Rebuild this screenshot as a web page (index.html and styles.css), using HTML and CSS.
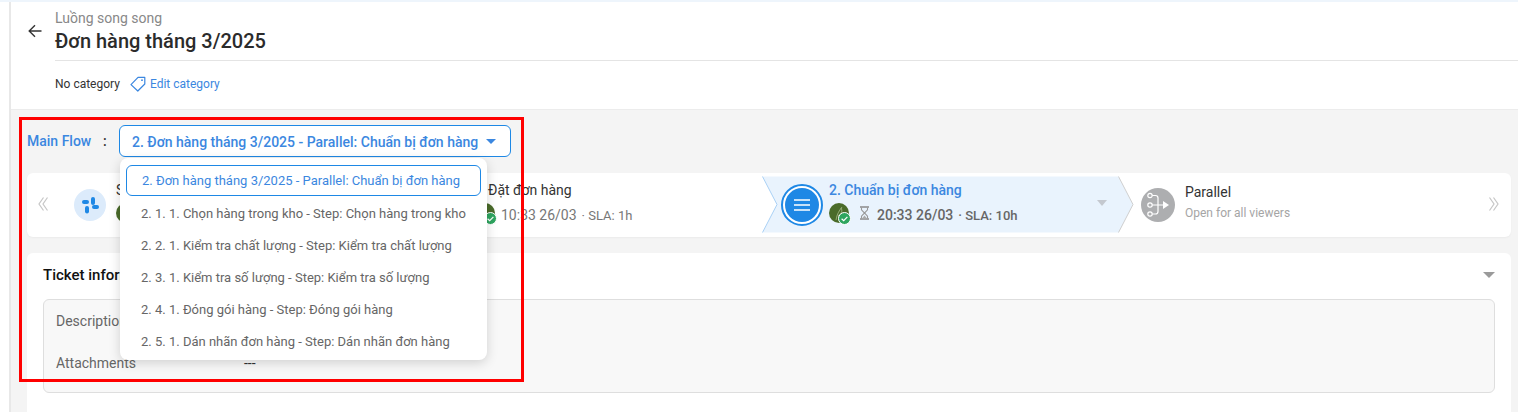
FILE: index.html
```html
<!DOCTYPE html>
<html lang="vi">
<head>
<meta charset="utf-8">
<title>Đơn hàng tháng 3/2025</title>
<link rel="stylesheet" href="styles.css">
</head>
<body>
<div class="page">
  <div class="topline"></div>
  <div class="shell">
    <div class="rail"></div>
    <div class="main">
      <header class="header">
        <div class="title-row">
          <svg class="back" width="14" height="14" viewBox="0 0 14 14"><path d="M13.5 7H1.5M7 1.2 1.2 7 7 12.8" fill="none" stroke="#333" stroke-width="1.4"/></svg>
          <div class="titles">
            <div class="subtitle">Luồng song song</div>
            <h1 class="title">Đơn hàng tháng 3/2025</h1>
          </div>
        </div>
        <div class="category">
          <span class="no-cat">No category</span>
          <svg class="tag" width="16" height="16" viewBox="0 0 16 16"><path d="M1 8.6 8 1.4H14.8V8L7.8 15Z" fill="none" stroke="#3b87e0" stroke-width="1.2" stroke-linejoin="round"/><circle cx="12" cy="4.2" r=".9" fill="#3b87e0"/></svg>
          <span class="edit-cat">Edit category</span>
        </div>
      </header>

      <div class="content">
        <div class="flow-row">
          <span class="flow-label">Main Flow</span>
          <span class="flow-colon">:</span>
          <div class="select">
            <span>2. Đơn hàng tháng 3/2025 - Parallel: Chuẩn bị đơn hàng</span>
            <span class="select-caret"></span>
          </div>
          <ul class="menu">
            <li class="menu-item selected">2. Đơn hàng tháng 3/2025 - Parallel: Chuẩn bị đơn hàng</li>
            <li class="menu-item">2. 1. 1. Chọn hàng trong kho - Step: Chọn hàng trong kho</li>
            <li class="menu-item">2. 2. 1. Kiểm tra chất lượng - Step: Kiểm tra chất lượng</li>
            <li class="menu-item">2. 3. 1. Kiểm tra số lượng - Step: Kiểm tra số lượng</li>
            <li class="menu-item">2. 4. 1. Đóng gói hàng - Step: Đóng gói hàng</li>
            <li class="menu-item">2. 5. 1. Dán nhãn đơn hàng - Step: Dán nhãn đơn hàng</li>
          </ul>
        </div>

        <section class="stepper">
          <span class="nav nav-prev"><svg width="10" height="14" viewBox="0 0 10 14"><path d="M5.5 .5 1 7 5.5 13.5M9.5 .5 5 7 9.5 13.5" fill="none" stroke="#c6c6c6" stroke-width="1.2"/></svg></span>
          <div class="step step-start">
            <span class="start-icon">
              <svg width="20" height="20" viewBox="0 0 20 20" fill="#1e88e5"><rect x="11" y="2" width="4" height="8" rx="2"/><rect x="12" y="10" width="7" height="4" rx="2"/><rect x="5" y="11" width="4" height="7.5" rx="2"/><rect x="2" y="5" width="7" height="4" rx="2"/></svg>
            </span>
            <div class="step-body">
              <div class="step-name">Start</div>
              <div class="step-meta"><span class="avatar"></span></div>
            </div>
          </div>
          <div class="step step-order">
            <div class="step-body">
              <div class="step-name order-name">1. Đặt đơn hàng</div>
              <div class="step-meta">
                <span class="avatar"><svg class="badge" width="13" height="13" viewBox="0 0 13 13"><circle cx="6.5" cy="6.5" r="6" fill="#2ea55f" stroke="#fff"/><path d="M3.6 6.7 5.7 8.7 9.4 4.8" fill="none" stroke="#fff" stroke-width="1.2"/></svg></span>
                <span class="time">10:33 26/03</span><span class="sla">· SLA: 1h</span>
              </div>
            </div>
          </div>
          <div class="step step-active">
            <svg class="hex" width="372" height="58" viewBox="0 0 372 58"><path d="M.5.5H356.5L371 28.5 356.5 56.5H.5L15 28.5Z" fill="#e9f3fd"/><path d="M.5.5 15 28.5.5 56.5" fill="none" stroke="#a9d0f5"/><path d="M356.5.5 371 28.5 356.5 56.5" fill="none" stroke="#cfcfcf"/></svg>
            <span class="ring"><span class="ring-fill"><svg width="16" height="14" viewBox="0 0 16 14"><path d="M0 2H16M0 7H16M0 12H16" stroke="#fff" stroke-width="1.6"/></svg></span></span>
            <div class="step-body">
              <div class="step-name active-name">2. Chuẩn bị đơn hàng</div>
              <div class="step-meta">
                <span class="avatar leaf"><svg class="leaf-mark" width="20" height="20" viewBox="0 0 20 20"><path d="M7 17C8 11 10 8 13 4M12 5C14 8 12 11 9 13" fill="none" stroke="#a8bd8c" stroke-width=".8"/></svg><svg class="badge" width="13" height="13" viewBox="0 0 13 13"><circle cx="6.5" cy="6.5" r="6" fill="#2ea55f" stroke="#fff"/><path d="M3.6 6.7 5.7 8.7 9.4 4.8" fill="none" stroke="#fff" stroke-width="1.2"/></svg></span>
                <svg class="hourglass" width="9" height="14" viewBox="0 0 9 14"><path d="M0 1H9M0 13H9" stroke="#8a8a8a" stroke-width="1.6"/><path d="M1.5 1.5V3.8L4.5 7 1.5 10.2V12.5M7.5 1.5V3.8L4.5 7 7.5 10.2V12.5" fill="none" stroke="#999" stroke-width="1.1"/><path d="M2 12.5 4.5 9.6 7 12.5Z" fill="#aaa"/></svg>
                <span class="time strong">20:33 26/03</span><span class="sla strong">· SLA: 10h</span>
              </div>
            </div>
            <span class="step-caret"></span>
          </div>
          <div class="step step-parallel">
            <span class="par-icon">
              <svg width="28" height="28" viewBox="0 0 28 28" fill="none" stroke="#fff" stroke-width="1.2"><circle cx="6" cy="4.5" r="2.2"/><circle cx="6" cy="14" r="2.2"/><circle cx="6" cy="23" r="2.2"/><path d="M8.2 4.5H11.5Q14 4.5 14 7V20.5Q14 23 11.5 23H8.2M8.2 14H20"/><path d="M19 10 25 14 19 18Z" fill="#fff" stroke="none"/></svg>
            </span>
            <div class="step-body">
              <div class="step-name">Parallel</div>
              <div class="step-note">Open for all viewers</div>
            </div>
          </div>
          <span class="nav nav-next"><svg width="10" height="14" viewBox="0 0 10 14"><path d="M.5 .5 5 7 .5 13.5M4.5 .5 9 7 4.5 13.5" fill="none" stroke="#c6c6c6" stroke-width="1.2"/></svg></span>
        </section>

        <section class="ticket">
          <div class="ticket-head">
            <h2 class="ticket-title">Ticket information</h2>
            <span class="ticket-caret"></span>
          </div>
          <div class="ticket-box">
            <div class="field"><span class="field-label">Description</span><span class="field-value">---</span></div>
            <div class="field"><span class="field-label">Attachments</span><span class="field-value">---</span></div>
          </div>
        </section>
      </div>
    </div>
  </div>
  <div class="highlight"></div>
</div>
</body>
</html>
```
FILE: styles.css
```css
* { box-sizing: border-box; }
html, body { margin: 0; padding: 0; }
body { font-family: Roboto, "Noto Sans", sans-serif; background: #fff; color: #333; }
.page { position: relative; width: 1518px; height: 412px; overflow: hidden; }
.topline { height: 2px; background: #eef5fc; }
.shell { display: flex; height: 410px; }
.rail { width: 11px; flex: none; background: #fff; border-right: 2px solid #e8e8e8; }
.main { flex: 1; min-width: 0; background: #f4f4f4; }

.header { height: 108px; background: #fff; padding-left: 17px; border-bottom: 1px solid #ececec; }
.title-row { display: flex; align-items: flex-start; height: 58px; }
.back { margin-top: 22px; margin-right: 13px; flex: none; }
.titles { flex: 1; height: 59px; border-bottom: 1px solid #e4e4e4; padding-top: 8px; }
.subtitle { font-size: 14px; line-height: 16px; color: #888; }
.title { margin: 3px 0 0; font-size: 20px; line-height: 24px; font-weight: 500; color: #2b2b2b; }
.category { display: flex; align-items: center; margin-top: 14px; padding-left: 27px; height: 20px; font-size: 12px; }
.no-cat { color: #333; }
.tag { margin: 0 4px 0 10px; }
.edit-cat { color: #3b87e0; }

.content { padding: 15px 7px 0 16px; }
.flow-row { position: relative; display: flex; align-items: center; height: 32px; }
.flow-label { width: 76px; font-size: 14px; font-weight: 500; color: #3b87e0; }
.flow-colon { width: 16px; font-size: 14px; font-weight: 500; color: #333; }
.select { display: flex; align-items: center; justify-content: space-between; width: 392px; height: 32px; padding: 1px 14px 0 12px; background: #fff; border: 1px solid #1e88e5; border-radius: 6px; font-size: 14px; font-weight: 500; color: #3b87e0; white-space: nowrap; }
.select-caret { width: 0; height: 0; border-left: 5px solid transparent; border-right: 5px solid transparent; border-top: 5px solid #3b87e0; }

.menu { position: absolute; z-index: 5; left: 93px; top: 33px; width: 367px; height: 202px; margin: 0; padding: 7px 6px; list-style: none; background: #fff; border-radius: 8px; box-shadow: 0 3px 12px rgba(0, 0, 0, .16); }
.menu-item { display: flex; align-items: center; height: 32px; padding-left: 15px; font-size: 13px; color: #666; white-space: nowrap; }
.menu-item.selected { height: 31px; margin-bottom: 1px; color: #3b87e0; border: 1px solid #1e88e5; border-radius: 6px; }

.stepper { display: flex; align-items: center; height: 64px; margin-top: 16px; background: #fff; border-radius: 6px; box-shadow: 0 1px 2px rgba(0, 0, 0, .04); }
.nav { flex: none; display: flex; align-items: center; justify-content: center; width: 35px; }
.nav svg { margin-bottom: 2px; }
.nav-prev { margin-right: 12px; padding-right: 3px; }
.step { display: flex; align-items: center; flex: none; height: 100%; }
.step-start { width: 401px; }
.step-order { width: 287px; }
.step-active { position: relative; width: 372px; height: 58px; }
.step-parallel { flex: 1; padding-left: 7px; }
.hex { position: absolute; left: 0; top: 0; }
.start-icon { flex: none; width: 32px; height: 32px; border-radius: 50%; background: #dcebfb; display: flex; align-items: center; justify-content: center; margin-right: 10px; }
.step-body { position: relative; min-width: 0; margin-bottom: 6px; }
.step-name { font-size: 14px; line-height: 18px; color: #333; white-space: nowrap; }
.order-name { margin-left: -2px; }
.active-name { font-weight: 500; color: #3b87e0; }
.step-meta { display: flex; align-items: center; height: 20px; margin-top: 4px; font-size: 14px; color: #777; white-space: nowrap; }
.step-note { margin-top: 4px; font-size: 12px; line-height: 16px; color: #a5a5a5; }
.avatar { position: relative; flex: none; display: block; width: 20px; height: 20px; border-radius: 50%; background: #4a6b2a; margin-right: 6px; }
.leaf { margin-right: 11px; }
.leaf-mark { position: absolute; left: 0; top: 0; }
.badge { position: absolute; right: -2px; bottom: -2px; }
.hourglass { margin-right: 8px; flex: none; }
.time, .sla { position: relative; top: 2px; }
.time.strong { font-weight: 500; color: #666; }
.sla { margin-left: 5px; font-size: 13px; }
.sla.strong { font-weight: 500; color: #666; }
.ring { position: relative; flex: none; width: 42px; height: 42px; margin-left: 19px; margin-right: 6px; border-radius: 50%; border: 2px solid #1e88e5; padding: 2px; background: #fff; }
.ring-fill { display: flex; align-items: center; justify-content: center; width: 34px; height: 34px; border-radius: 50%; background: #1e88e5; }
.step-caret { position: absolute; right: 27px; top: 24px; width: 0; height: 0; border-left: 5px solid transparent; border-right: 5px solid transparent; border-top: 6px solid #c4c8cf; }
.par-icon { flex: none; width: 34px; height: 34px; border-radius: 50%; background: #adaeb0; display: flex; align-items: center; justify-content: center; margin-right: 10px; }

.ticket { margin-top: 16px; height: 170px; padding: 0 16px; background: #fff; border-radius: 6px 6px 0 0; }
.ticket-head { display: flex; align-items: center; justify-content: space-between; height: 46px; padding-bottom: 3px; }
.ticket-title { margin: 0; font-size: 15px; font-weight: 500; color: #111; white-space: nowrap; }
.ticket-caret { width: 0; height: 0; border-left: 6px solid transparent; border-right: 6px solid transparent; border-top: 6px solid #9a9a9a; }
.ticket-box { height: 94px; padding: 0 12px; background: #f8f8f8; border: 1px solid #dedede; border-radius: 6px; }
.field { display: flex; align-items: center; height: 42px; font-size: 14px; color: #666; }
.field-label { width: 188px; }
.field-value { color: #333; }

.highlight { position: absolute; z-index: 10; left: 19px; top: 117px; width: 505px; height: 265px; border: 3px solid #f00; pointer-events: none; }
```
